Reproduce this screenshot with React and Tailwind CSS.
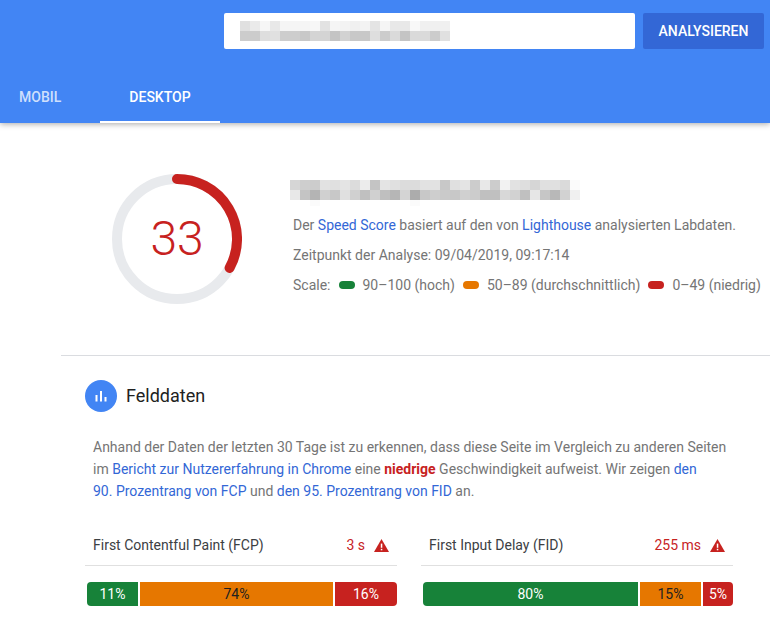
const inputMosaic = [
  ['#e0e0e0', '#eaeaea', '#f6f6f6', '#e8e8e8', '#f5f5f5', '#f5f5f5', '#f5f5f5', '#f7f7f7', '#e2e2e2', '#f5f5f5', '#f3f3f3', '#f0f0f0', '#f3f3f3', '#e4e4e4', '#f5f5f5', '#e8e8e8', '#e8e8e8', '#f8f8f8', '#f0f0f0', '#f0f0f0', '#f0f0f0'],
  ['#cccccc', '#cccccc', '#dedede', '#e0e0e0', '#cdcdcd', '#cdcdcd', '#c8c8c8', '#d4d4d4', '#d4d4d4', '#c4c4c4', '#d2d2d2', '#c8c8c8', '#c8c8c8', '#dedede', '#cccccc', '#dadada', '#c4c4c4', '#dadada', '#dadada', '#cccccc', '#e0e0e0'],
];

const urlMosaic = [
  ['#d6d6d6', '#cecece', '#cccccc', '#e2e2e2', '#e0e0e0', '#e4e4e4', '#dcdcdc', '#ececec', '#c4c4c4', '#e4e4e4', '#e0e0e0', '#dcdcdc', '#dcdcdc', '#e2e2e2', '#e2e2e2', '#c8c8c8', '#e0e0e0', '#e4e4e4', '#cccccc', '#e8e8e8', '#cccccc', '#f2f2f2', '#e2e2e2', '#dedede', '#d6d6d6', '#e0e0e0', '#e0e0e0', '#dadada', '#fbfbfb'],
  ['#e8e8e8', '#c4c4c4', '#b4b4b4', '#d0d0d0', '#c8c8c8', '#e0e0e0', '#d0d0d0', '#c0c0c0', '#d0d0d0', '#bfbfbf', '#b6b6b6', '#d4d4d4', '#acacac', '#c8c8c8', '#cecece', '#cacaca', '#c8c8c8', '#d0d0d0', '#cccccc', '#c0c0c0', '#c0c0c0', '#d8d8d8', '#d2d2d2', '#c0c0c0', '#e6e6e6', '#c6c6c6', '#b8b8b8', '#d2d2d2', '#f0f0f0'],
];

function Mosaic({ rows }) {
  return (
    <div className="flex flex-col">
      {rows.map((row, i) => (
        <div key={i} className="flex">
          {row.map((color, j) => (
            <div key={j} className="w-[10px] h-[10px]" style={{ backgroundColor: color }}></div>
          ))}
        </div>
      ))}
    </div>
  );
}

function Warning() {
  return (
    <svg width="15" height="13" viewBox="0 0 15 13" className="ml-[9px]">
      <path d="M7.5 0 L15 13 H0 Z" fill="#c7221f" />
      <rect x="6.8" y="4.6" width="1.5" height="4.2" fill="#fff" />
      <rect x="6.8" y="9.8" width="1.5" height="1.5" fill="#fff" />
    </svg>
  );
}

function Metric({ name, value, bars, className }) {
  return (
    <div className={className}>
      <div className="flex items-center justify-between h-[40px] px-[8px] border-b border-[#e0e0e0]">
        <span className="text-[14px] text-[#3c4043]">{name}</span>
        <span className="flex items-center text-[14px] text-[#c7221f]">
          {value}
          <Warning />
        </span>
      </div>
      <div className="flex gap-[2px] mt-[16px] ml-[2px] h-[24px] rounded-[4px] overflow-hidden text-[14px] leading-[24px] text-center">
        {bars.map((bar) => (
          <div key={bar.label} className={bar.className}>
            {bar.label}
          </div>
        ))}
      </div>
    </div>
  );
}

export default function App() {
  return (
    <div className="w-[770px] h-[626px] overflow-hidden bg-white font-['Roboto',sans-serif]">
      <header className="h-[123px] bg-[#4285f4] shadow-[0_1px_6px_rgba(0,0,0,0.35)] relative">
        <div className="flex justify-end gap-[8px] pt-[13px] pr-[6px]">
          <div className="w-[411px] h-[36px] bg-white rounded-[2px] flex items-center pl-[16px]">
            <Mosaic rows={inputMosaic} />
          </div>
          <button className="w-[121px] h-[36px] bg-[#3367d6] rounded-[2px] text-white text-[14px] font-medium">
            ANALYSIEREN
          </button>
        </div>
        <nav className="flex mt-[27px] text-[14px] font-medium">
          <div className="w-[100px] h-[47px] pt-[11px] pl-[19px] text-white/75">MOBIL</div>
          <div className="w-[120px] h-[47px] pt-[11px] text-center text-white border-b-2 border-white">DESKTOP</div>
        </nav>
      </header>

      <section className="flex h-[233px] ml-[61px] border-b border-[#dadce0]">
        <div className="w-[229px] shrink-0 pt-[51px] pl-[51px]">
          <div className="relative w-[130px] h-[130px]">
            <svg width="130" height="130" viewBox="0 0 130 130">
              <circle cx="65" cy="65" r="60" fill="none" stroke="#e8eaed" strokeWidth="10" />
              <path d="M65 5 A60 60 0 0 1 117.6 93.9" fill="none" stroke="#c7221f" strokeWidth="10" strokeLinecap="round" />
            </svg>
            <div className="absolute inset-0 flex items-center justify-center text-[48px] font-light text-[#c7221f]">33</div>
          </div>
        </div>
        <div className="pt-[57px] text-[14px] text-[#757575] whitespace-nowrap">
          <Mosaic rows={urlMosaic} />
          {/* faint bleed of the blur under the url */}
          <div className="flex h-[6px] -mb-[6px]">
            <div className="w-[20px]"></div>
            <div className="w-[10px] bg-[#fbfbfb]"></div>
            <div className="w-[90px]"></div>
            <div className="w-[10px] bg-[#fbfbfb]"></div>
          </div>
          <p className="mt-[15px] ml-[3px] leading-[20px]">
            Der <a className="text-[#3367d6]">Speed Score</a> basiert auf den von <a className="text-[#3367d6]">Lighthouse</a> analysierten Labdaten.
          </p>
          <p className="mt-[10px] ml-[3px] leading-[20px]">Zeitpunkt der Analyse: 09/04/2019, 09:17:14</p>
          <div className="flex items-center mt-[10px] ml-[3px] leading-[20px]">
            Scale:
            <span className="w-[16px] h-[8px] rounded-full bg-[#178239] ml-[9px] mr-[7px]"></span>
            90–100 (hoch)
            <span className="w-[16px] h-[8px] rounded-full bg-[#e67700] ml-[8px] mr-[8px]"></span>
            50–89 (durchschnittlich)
            <span className="w-[16px] h-[8px] rounded-full bg-[#c7221f] ml-[8px] mr-[8px]"></span>
            0–49 (niedrig)
          </div>
        </div>
      </section>

      <section className="pl-[85px] pr-[37px]">
        <div className="flex items-center mt-[24px] h-[32px]">
          <div className="w-[32px] h-[32px] rounded-full bg-[#4285f4] flex items-center justify-center">
            <svg width="12" height="12" viewBox="0 0 12 12">
              <rect x="0.5" y="5" width="2" height="6.5" fill="#fff" />
              <rect x="5" y="1" width="2" height="10.5" fill="#fff" />
              <rect x="9.5" y="7" width="2" height="4.5" fill="#fff" />
            </svg>
          </div>
          <h2 className="ml-[9px] -mt-[2px] text-[18px] text-[#212121]">Felddaten</h2>
        </div>
        <p className="mt-[24px] ml-[8px] whitespace-nowrap text-[14px] leading-[22px] text-[#757575]">
          Anhand der Daten der letzten 30 Tage ist zu erkennen, dass diese Seite im Vergleich zu anderen Seiten
          <br />
          im <a className="text-[#3367d6]">Bericht zur Nutzererfahrung in Chrome</a> eine <b className="text-[#c7221f] font-bold">niedrige</b> Geschwindigkeit aufweist. Wir zeigen <a className="text-[#3367d6]">den</a>
          <br />
          <a className="text-[#3367d6]">90. Prozentrang von FCP</a> und <a className="text-[#3367d6]">den 95. Prozentrang von FID</a> an.
        </p>
        <div className="flex gap-[24px] mt-[24px]">
          <Metric
            name="First Contentful Paint (FCP)"
            value="3 s"
            className="w-[312px]"
            bars={[
              { label: '11%', className: 'w-[51px] bg-[#178239] text-white' },
              { label: '74%', className: 'w-[193px] bg-[#e67700] text-[#212121]' },
              { label: '16%', className: 'w-[62px] bg-[#c7221f] text-white' },
            ]}
          />
          <Metric
            name="First Input Delay (FID)"
            value="255 ms"
            className="w-[312px]"
            bars={[
              { label: '80%', className: 'w-[215px] bg-[#178239] text-white' },
              { label: '15%', className: 'w-[61px] bg-[#e67700] text-[#212121]' },
              { label: '5%', className: 'w-[30px] bg-[#c7221f] text-white' },
            ]}
          />
        </div>
      </section>
    </div>
  );
}
